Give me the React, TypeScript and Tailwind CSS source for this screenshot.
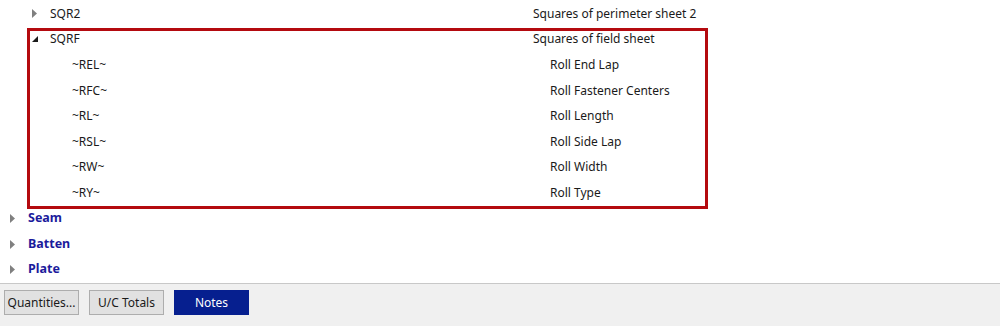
import React from 'react';

type Row = {
  level: 0 | 1 | 2;
  name: string;
  desc?: string;
  state?: 'open' | 'closed';
};

const ROWS: Row[] = [
  { level: 1, name: 'SQR2', desc: 'Squares of perimeter sheet 2', state: 'closed' },
  { level: 1, name: 'SQRF', desc: 'Squares of field sheet', state: 'open' },
  { level: 2, name: '~REL~', desc: 'Roll End Lap' },
  { level: 2, name: '~RFC~', desc: 'Roll Fastener Centers' },
  { level: 2, name: '~RL~', desc: 'Roll Length' },
  { level: 2, name: '~RSL~', desc: 'Roll Side Lap' },
  { level: 2, name: '~RW~', desc: 'Roll Width' },
  { level: 2, name: '~RY~', desc: 'Roll Type' },
  { level: 0, name: 'Seam', state: 'closed' },
  { level: 0, name: 'Batten', state: 'closed' },
  { level: 0, name: 'Plate', state: 'closed' },
];

const Closed = () => (
  <svg width="5" height="9" viewBox="0 0 5 9" className="block">
    <path d="M0 0 L5 4.5 L0 9 Z" fill="#808080" />
  </svg>
);

const Open = () => (
  <svg width="6" height="6" viewBox="0 0 6 6" className="block">
    <path d="M6 0 L6 6 L0 6 Z" fill="#1a1a1a" />
  </svg>
);

const indent = { 0: 'pl-[10px]', 1: 'pl-[32px]', 2: 'pl-[72px]' };
const nameWidth = { 0: 'w-[533px]', 1: 'w-[533px]', 2: 'w-[550px]' };

const TreeRow: React.FC<{ row: Row }> = ({ row }) => {
  const bold = row.level === 0;
  return (
    <div className="flex items-center h-[25.6px]">
      <div className={`flex items-center shrink-0 ${indent[row.level]} ${nameWidth[row.level]}`}>
        {row.state && (
          <span className="w-[18px] flex items-center">{row.state === 'open' ? <Open /> : <Closed />}</span>
        )}
        <span className={bold ? 'font-bold text-[#1b1b9c] text-[12.5px]' : 'text-[#1a1a1a]'}>{row.name}</span>
      </div>
      {row.desc && <span className="text-[#1a1a1a]">{row.desc}</span>}
    </div>
  );
};

const Btn: React.FC<{ label: string; active?: boolean }> = ({ label, active }) => (
  <button
    className={`w-[75px] h-[25px] flex items-center justify-center border text-[12px] ${
      active ? 'bg-[#061f8f] border-[#061f8f] text-white' : 'bg-[#e1e1e1] border-[#adadad] text-[#1a1a1a]'
    }`}
  >
    {label}
  </button>
);

export default function App() {
  return (
    <div className="w-[1000px] h-[326px] flex flex-col bg-[#f0f0f0] text-[12px] font-['Noto_Sans','Open_Sans',sans-serif] overflow-hidden">
      <div className="relative h-[284px] pt-[1px] bg-white border-b border-[#c8c8c8] shrink-0">
        {ROWS.map(r => (
          <TreeRow key={r.name} row={r} />
        ))}
        <div className="absolute left-[27px] top-[28px] w-[681px] h-[181px] border-[3px] border-[#b40a0f] pointer-events-none" />
      </div>
      <div className="flex gap-[10px] pl-[4px] pt-[6px]">
        <Btn label="Quantities..." />
        <Btn label="U/C Totals" />
        <Btn label="Notes" active />
      </div>
    </div>
  );
}
